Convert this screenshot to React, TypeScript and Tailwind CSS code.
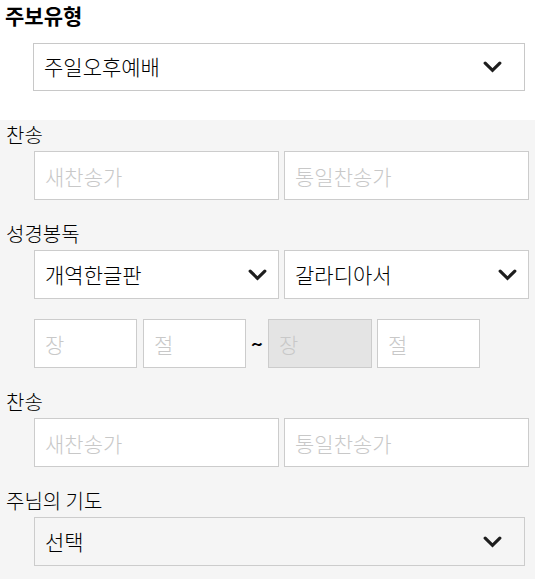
import React from "react";

const Chevron = () => (
  <svg width="19" height="12" viewBox="0 0 19 12" className="shrink-0">
    <path
      d="M2.2 2.2 L9.5 9.3 L16.8 2.2"
      fill="none"
      stroke="#1e1e1e"
      strokeWidth="3.2"
      strokeLinecap="round"
      strokeLinejoin="miter"
    />
  </svg>
);

const Label = ({ children }: { children: React.ReactNode }) => (
  <div className="pl-[6px] text-[20px] font-light leading-[27px] text-black">{children}</div>
);

const TextBox = ({ placeholder, className = "" }: { placeholder: string; className?: string }) => (
  <input
    placeholder={placeholder}
    className={
      "h-[49px] border border-[#cccccc] pl-[10px] text-[21px] font-light text-black outline-none placeholder:text-[#c8c8c8] " +
      className
    }
  />
);

const SelectBox = ({ value, className = "" }: { value: string; className?: string }) => (
  <div
    className={
      "h-[49px] border border-[#cccccc] flex items-center justify-between pl-[10px] text-[21px] font-light text-black " +
      className
    }
  >
    <span>{value}</span>
    <Chevron />
  </div>
);

export default function App() {
  return (
    <div className="w-[535px] min-h-[579px] bg-[#f5f5f5] font-['Noto_Sans_CJK_KR','Noto_Sans',sans-serif]">
      <div className="h-[120px] bg-white pl-[5px]">
        <h2 className="text-[21px] font-bold leading-[30px] text-black">주보유형</h2>
        <div className="mt-[13px] ml-[28px] w-[492px] h-[48px] border border-[#c8c8c8] bg-white flex items-center justify-between pl-[10px] pr-[22px] text-[21px] font-light text-black">
          <span>주일오후예배</span>
          <Chevron />
        </div>
      </div>

      <div className="pt-[1px]">
        <Label>찬송</Label>
        <div className="mt-[3px] mb-[20px] pl-[34px] flex gap-[5px]">
          <TextBox placeholder="새찬송가" className="w-[245px] bg-white" />
          <TextBox placeholder="통일찬송가" className="w-[245px] bg-white" />
        </div>

        <Label>성경봉독</Label>
        <div className="mt-[3px] mb-[20px] pl-[34px] flex gap-[5px]">
          <SelectBox value="개역한글판" className="w-[245px] pr-[11px] bg-white" />
          <SelectBox value="갈라디아서" className="w-[245px] pr-[11px] bg-white" />
        </div>

        <div className="mb-[20px] pl-[34px] flex items-center">
          <TextBox placeholder="장" className="w-[103px] bg-white" />
          <TextBox placeholder="절" className="w-[103px] ml-[6px] bg-white" />
          <span className="w-[22px] text-center text-[20px] font-bold leading-none text-black">~</span>
          <TextBox placeholder="장" className="w-[104px] bg-[#e4e4e4]" />
          <TextBox placeholder="절" className="w-[103px] ml-[5px] bg-white" />
        </div>

        <Label>찬송</Label>
        <div className="mt-[3px] mb-[20px] pl-[34px] flex gap-[5px]">
          <TextBox placeholder="새찬송가" className="w-[245px] bg-white" />
          <TextBox placeholder="통일찬송가" className="w-[245px] bg-white" />
        </div>

        <Label>주님의 기도</Label>
        <div className="mt-[3px] mb-[20px] pl-[34px] flex">
          <SelectBox value="선택" className="w-[491px] pr-[22px] bg-[#f5f5f5]" />
        </div>
      </div>
    </div>
  );
}
